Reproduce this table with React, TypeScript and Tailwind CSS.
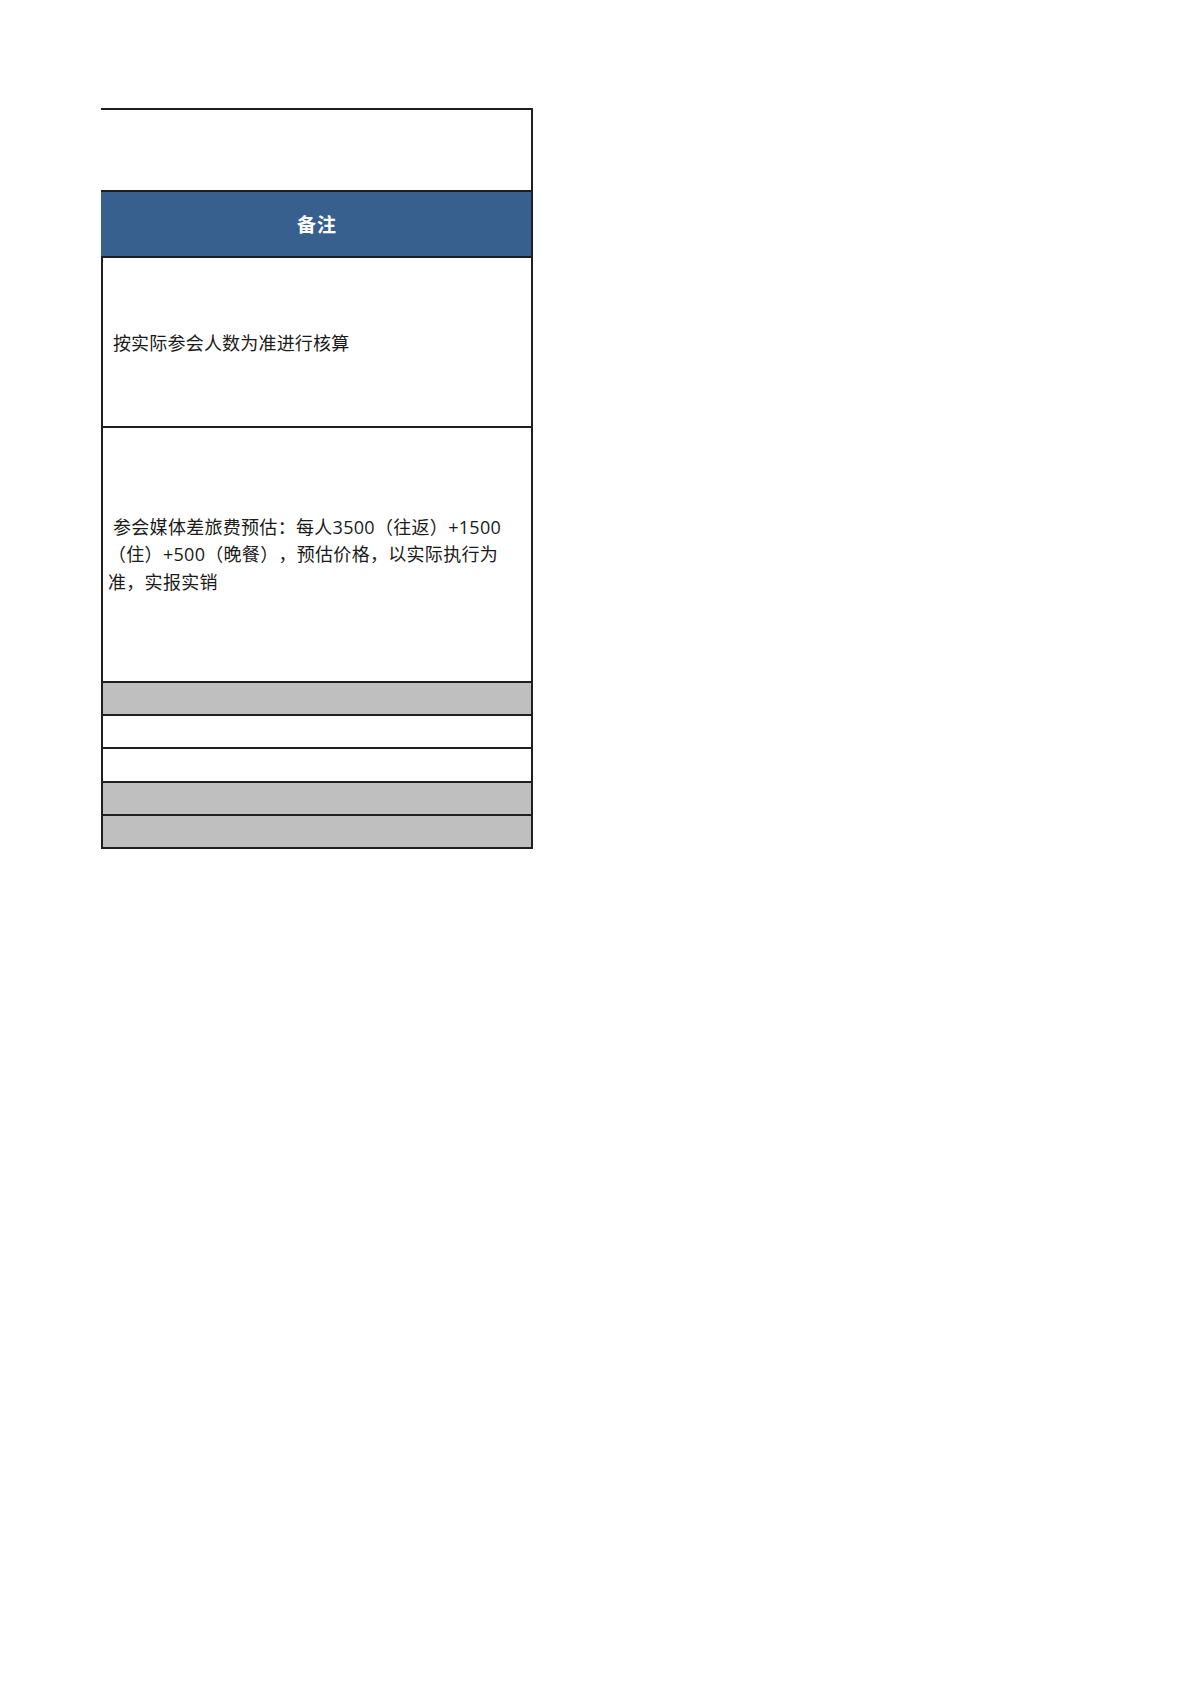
const font = { fontFamily: '"Open Sans", "Noto Sans CJK SC", "Noto Sans", sans-serif' };

function GrayRow({ h, last = false }: { h: string; last?: boolean }) {
  return (
    <div
      className={`${h} border-x-2 border-t-2 border-[#1f1f1f] bg-[#bfbfbf] ${last ? "border-b-2" : ""}`}
    />
  );
}

export default function App() {
  return (
    <div className="min-h-[1698px] w-[1200px] bg-white pt-[108px] pl-[101px]" style={font}>
      <div className="flex w-[432px] flex-col">
        {/* blank title area */}
        <div className="h-[82px] border-t-2 border-r-2 border-[#1f1f1f]" />

        {/* header */}
        <div className="flex h-[66px] items-center justify-center border-t-2 border-r-2 border-[#1f1f1f] bg-[#37608f] pt-[2px] pl-[2px]">
          <span className="text-[19px] font-bold tracking-[1px] text-white">备注</span>
        </div>

        {/* row 1 */}
        <div className="flex h-[170px] items-center border-x-2 border-t-2 border-[#1f1f1f] pt-[2px] pl-[5px]">
          <p className="text-[18px] leading-[27px] tracking-[0.2px] text-[#1a1a1a]">&nbsp;按实际参会人数为准进行核算</p>
        </div>

        {/* row 2 */}
        <div className="flex h-[255px] items-center border-x-2 border-t-2 border-[#1f1f1f] pt-[1px] pl-[5px]">
          <p className="w-[396px] text-[18px] leading-[27.5px] tracking-[0.3px] text-[#1a1a1a] [text-spacing-trim:space-all]">
            &nbsp;参会媒体差旅费预估：每人3500（往返）+1500（住）+500（晚餐），预估价格，以实际执行为准，实报实销
          </p>
        </div>

        <GrayRow h="h-[33px]" />
        <div className="h-[33px] border-x-2 border-t-2 border-[#1f1f1f]" />
        <div className="h-[34px] border-x-2 border-t-2 border-[#1f1f1f]" />
        <GrayRow h="h-[33px]" />
        <GrayRow h="h-[35px]" last />
      </div>
    </div>
  );
}
